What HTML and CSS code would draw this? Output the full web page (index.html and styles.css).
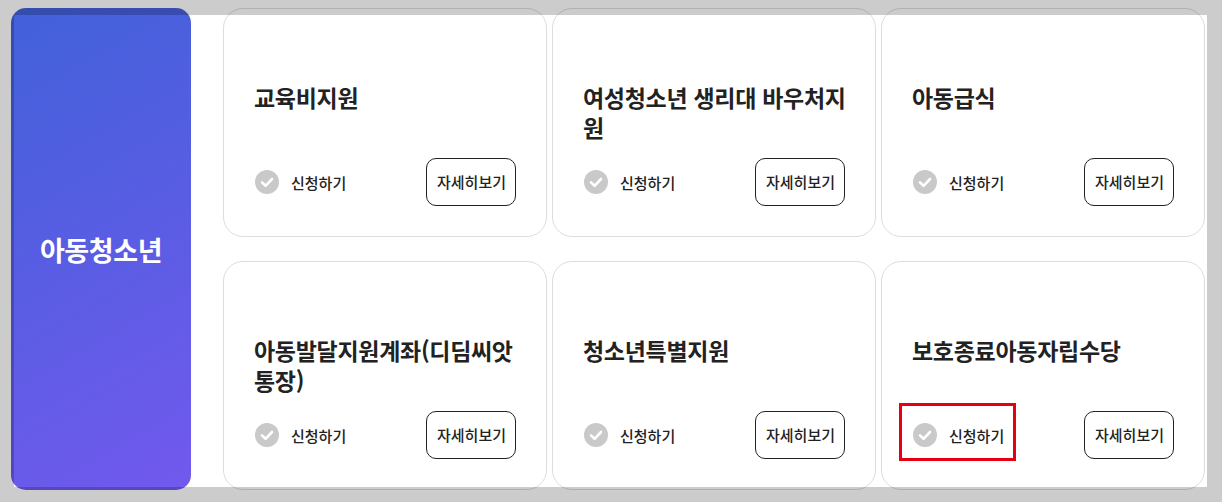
FILE: index.html
```html
<!DOCTYPE html>
<html lang="ko">
<head>
    <meta charset="UTF-8">
    <title>아동청소년</title>
    <link rel="stylesheet" href="styles.css">
</head>
<body>
    <div class="wrap">
        <div class="side">아동청소년</div>
        <div class="cards">
            <div class="card">
                <h3 class="title">교육비지원</h3>
                <div class="foot">
                    <a class="apply"><svg class="check" viewBox="0 0 24 24"><circle cx="12" cy="12" r="12" fill="#c9c9c9"/><path d="M7 12.4l3.6 3.4L17 9" fill="none" stroke="#fff" stroke-width="2.6" stroke-linecap="round" stroke-linejoin="round"/></svg>신청하기</a>
                    <a class="more">자세히보기</a>
                </div>
            </div>
            <div class="card">
                <h3 class="title">여성청소년 생리대 바우처지원</h3>
                <div class="foot">
                    <a class="apply"><svg class="check" viewBox="0 0 24 24"><circle cx="12" cy="12" r="12" fill="#c9c9c9"/><path d="M7 12.4l3.6 3.4L17 9" fill="none" stroke="#fff" stroke-width="2.6" stroke-linecap="round" stroke-linejoin="round"/></svg>신청하기</a>
                    <a class="more">자세히보기</a>
                </div>
            </div>
            <div class="card">
                <h3 class="title">아동급식</h3>
                <div class="foot">
                    <a class="apply"><svg class="check" viewBox="0 0 24 24"><circle cx="12" cy="12" r="12" fill="#c9c9c9"/><path d="M7 12.4l3.6 3.4L17 9" fill="none" stroke="#fff" stroke-width="2.6" stroke-linecap="round" stroke-linejoin="round"/></svg>신청하기</a>
                    <a class="more">자세히보기</a>
                </div>
            </div>
            <div class="card">
                <h3 class="title">아동발달지원계좌(디딤씨앗통장)</h3>
                <div class="foot">
                    <a class="apply"><svg class="check" viewBox="0 0 24 24"><circle cx="12" cy="12" r="12" fill="#c9c9c9"/><path d="M7 12.4l3.6 3.4L17 9" fill="none" stroke="#fff" stroke-width="2.6" stroke-linecap="round" stroke-linejoin="round"/></svg>신청하기</a>
                    <a class="more">자세히보기</a>
                </div>
            </div>
            <div class="card">
                <h3 class="title">청소년특별지원</h3>
                <div class="foot">
                    <a class="apply"><svg class="check" viewBox="0 0 24 24"><circle cx="12" cy="12" r="12" fill="#c9c9c9"/><path d="M7 12.4l3.6 3.4L17 9" fill="none" stroke="#fff" stroke-width="2.6" stroke-linecap="round" stroke-linejoin="round"/></svg>신청하기</a>
                    <a class="more">자세히보기</a>
                </div>
            </div>
            <div class="card">
                <h3 class="title">보호종료아동자립수당</h3>
                <div class="foot">
                    <a class="apply marked"><svg class="check" viewBox="0 0 24 24"><circle cx="12" cy="12" r="12" fill="#c9c9c9"/><path d="M7 12.4l3.6 3.4L17 9" fill="none" stroke="#fff" stroke-width="2.6" stroke-linecap="round" stroke-linejoin="round"/></svg>신청하기</a>
                    <a class="more">자세히보기</a>
                </div>
            </div>
        </div>
    </div>

    <!-- Grey dim around the captured area -->
    <div class="dim"></div>
</body>
</html>
```

FILE: styles.css
```css
html, body {
    height: 100%;
    margin: 0;
    overflow: hidden;
    background-color: white;
    font-family: "Noto Sans CJK KR", "Noto Sans", sans-serif;
    color: #222;
}

.wrap {
    display: flex;
    gap: 32px;
    padding: 8px 17px 12px 11px;
}

/* Left blue panel */
.side {
    display: flex;
    justify-content: center;
    align-items: center;
    width: 180px;
    height: 482px;
    flex: none;
    border-radius: 15px;
    background: linear-gradient(150deg, #4161d9, #7259ee);
    color: white;
    font-size: 27px;
    font-weight: 700;
    letter-spacing: -0.4px;
}

/* Cards */
.cards {
    display: grid;
    grid-template-columns: repeat(3, 324px);
    grid-template-rows: repeat(2, 229px);
    column-gap: 5px;
    row-gap: 24px;
}

.card {
    display: flex;
    flex-direction: column;
    box-sizing: border-box;
    padding: 73px 30px 30px 30px;
    background-color: white;
    border: 1px solid #ddd;
    border-radius: 20px;
}

.title {
    margin: 0 -4px 0 0;
    font-size: 23px;
    font-weight: 700;
    line-height: 30px;
    letter-spacing: -0.3px;
}

.foot {
    display: flex;
    justify-content: space-between;
    align-items: center;
    margin-top: auto;
}

.apply {
    position: relative;
    display: flex;
    align-items: center;
    gap: 12px;
    margin-left: 1px;
    font-size: 15px;
    font-weight: 500;
}

.check {
    width: 24px;
    height: 24px;
}

/* Red marker box */
.marked::after {
    content: '';
    position: absolute;
    top: -20px;
    right: -12px;
    bottom: -14px;
    left: -14px;
    border: 3px solid #e60012;
}

.more {
    box-sizing: border-box;
    width: 90px;
    height: 48px;
    padding-left: 1px;
    line-height: 46px;
    text-align: center;
    border: 1px solid #222;
    border-radius: 10px;
    font-size: 15px;
    font-weight: 500;
}

.dim {
    position: absolute;
    top: 15px;
    left: 14px;
    width: 1193px;
    height: 472px;
    box-shadow: 0 0 0 2000px rgba(0, 0, 0, 0.2);
    pointer-events: none;
}
```
